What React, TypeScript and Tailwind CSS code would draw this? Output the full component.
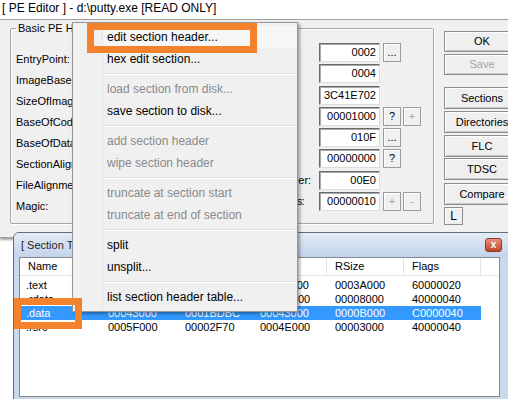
import React from 'react';

const leftLabels = [
  'EntryPoint:',
  'ImageBase:',
  'SizeOfImage:',
  'BaseOfCode:',
  'BaseOfData:',
  'SectionAlignment:',
  'FileAlignment:',
  'Magic:',
];

type Btn = { t: string; off?: boolean };
type Row = { label: string; value: string; btns: Btn[]; tight?: boolean };

// labels of the first rows sit under the popup menu, so they are left empty
const rightRows: Row[] = [
  { label: '', value: '0002', btns: [{ t: '...' }] },
  { label: '', value: '0004', btns: [] },
  { label: '', value: '3C41E702', btns: [] },
  { label: '', value: '00001000', btns: [{ t: '?' }, { t: '+', off: true }] },
  { label: '', value: '010F', btns: [{ t: '...' }] },
  { label: '', value: '00000000', btns: [{ t: '?' }] },
  { label: 'SizeOfOptionalHeader:', value: '00E0', btns: [] },
  { label: 'NumberOfRvaAndSizes:', value: '00000010', btns: [{ t: '+', off: true }, { t: '-', off: true }], tight: true },
];

type MenuItem = { t: string; off?: boolean } | 'sep';

const menu: MenuItem[] = [
  { t: 'edit section header...' },
  { t: 'hex edit section...' },
  'sep',
  { t: 'load section from disk...', off: true },
  { t: 'save section to disk...' },
  'sep',
  { t: 'add section header', off: true },
  { t: 'wipe section header', off: true },
  'sep',
  { t: 'truncate at section start', off: true },
  { t: 'truncate at end of section', off: true },
  'sep',
  { t: 'split' },
  { t: 'unsplit...' },
  'sep',
  { t: 'list section header table...' },
];

const cols = [
  { name: 'Name', w: 'w-[80px]' },
  { name: '', w: 'w-[77px]' },
  { name: '', w: 'w-[75px]' },
  { name: 'ROffset', w: 'w-[75px]' },
  { name: 'RSize', w: 'w-[77px]' },
  { name: 'Flags', w: 'w-[77px]' },
];

const sections = [
  ['.text', '', '', '00001000', '0003A000', '60000020'],
  ['.rdata', '', '', '0003B000', '00008000', '40000040'],
  ['.data', '00043000', '0001BDBC', '00043000', '0000B000', 'C0000040'],
  ['.rsrc', '0005F000', '00002F70', '0004E000', '00003000', '40000040'],
];

function SmallBtn({ b }: { b: Btn }) {
  return (
    <div
      className={`w-[18px] h-[19px] flex items-center justify-center border border-[#9c9c9c] bg-[#f0f0f0] shadow-[inset_1px_1px_0_#fff] leading-none ${
        b.off ? 'text-[#a8a8a8]' : 'text-black'
      }`}
    >
      {b.t}
    </div>
  );
}

function DlgBtn({ label, off, h, mt }: { label: string; off?: boolean; h: string; mt: string }) {
  return (
    <div
      className={`${h} ${mt} w-[76px] flex items-center justify-center border border-[#8e8e8e] bg-[#efefef] shadow-[inset_1px_1px_0_#fff,inset_-1px_-1px_0_#c8c8c8] ${
        off ? 'text-[#a3a3a3]' : 'text-black'
      }`}
    >
      {label}
    </div>
  );
}

export default function App() {
  return (
    <div className="relative w-[508px] h-[399px] overflow-hidden bg-white text-black font-['Liberation_Sans',Arial,sans-serif]">
      {/* title */}
      <div className="h-[19px] pl-[2px] text-[12px] leading-[17px] whitespace-nowrap">
        {'[ PE Editor ] - d:\\putty.exe [READ ONLY]'}
      </div>

      {/* main dialog */}
      <div className="h-[219px] w-[580px] bg-[#f0f0f0] border-t border-b border-[#a0a0a0] shadow-[0_2px_2px_rgba(0,0,0,0.35)] flex items-start text-[11px]">
        <fieldset className="ml-[10px] mt-[2px] w-[424px] h-[202px] border border-[#a8a8a8] rounded-[2px] shadow-[inset_1px_1px_0_#fff,1px_1px_0_#fff]">
          <legend className="ml-[5px] px-[2px] leading-[13px] whitespace-nowrap">Basic PE H</legend>
          <div className="flex">
            <div className="w-[187px] pl-[5px] pt-[14px] flex flex-col">
              {leftLabels.map((l) => (
                <div key={l} className="h-[21px] leading-[21px] whitespace-nowrap">
                  {l}
                </div>
              ))}
            </div>
            <div className="pt-[8px] flex flex-col gap-[2.3px]">
              {rightRows.map((r) => (
                <div key={r.value} className="h-[19px] flex items-center">
                  <div
                    className={`w-[121px] whitespace-nowrap overflow-hidden ${r.tight ? 'tracking-[-0.7px]' : ''}`}
                  >
                    {r.label}
                  </div>
                  <div className="w-[61px] h-[19px] bg-white border border-t-[#6a6a6a] border-l-[#6a6a6a] border-r-[#dcdcdc] border-b-[#dcdcdc] shadow-[inset_1px_1px_0_#a8a8a8] text-right pr-[3px] leading-[17px]">
                    {r.value}
                  </div>
                  <div className="ml-[3px] flex gap-[2px]">
                    {r.btns.map((b, i) => (
                      <SmallBtn key={i} b={b} />
                    ))}
                  </div>
                </div>
              ))}
            </div>
          </div>
        </fieldset>

        <div className="ml-[10px] flex flex-col">
          <DlgBtn label="OK" h="h-[21px]" mt="mt-[11px]" />
          <DlgBtn label="Save" off h="h-[21px]" mt="mt-[2px]" />
          <DlgBtn label="Sections" h="h-[22px]" mt="mt-[12px]" />
          <DlgBtn label="Directories" h="h-[22px]" mt="mt-[2px]" />
          <DlgBtn label="FLC" h="h-[22px]" mt="mt-[2px]" />
          <DlgBtn label="TDSC" h="h-[22px]" mt="mt-[1px]" />
          <DlgBtn label="Compare" h="h-[22px]" mt="mt-[3px]" />
          <div className="mt-[2px] w-[19px] h-[18px] flex items-center justify-center border border-[#8e8e8e] bg-[#efefef] shadow-[inset_1px_1px_0_#fff] text-[12px]">
            L
          </div>
        </div>
      </div>

      {/* section table window */}
      <div className="absolute left-[13px] top-[232px] w-[500px] h-[172px] border border-[#5f6e81] rounded-t-[6px] bg-[#c9d8eb] flex flex-col">
        <div className="h-[24px] flex items-center pl-[7px] pr-[10px] rounded-t-[5px] bg-gradient-to-b from-[#e3ebf6] to-[#c2d3e9]">
          <span className="text-[11px] text-[#1e1e1e] whitespace-nowrap">[ Section T</span>
          <div className="ml-auto w-[17px] h-[14px] rounded-[3px] border border-[#8c3a2a] bg-gradient-to-b from-[#e8917c] to-[#c4412b] flex items-center justify-center text-white text-[10px] font-bold leading-none">
            x
          </div>
        </div>
        <div className="ml-[5px] w-[481px] h-[140px] bg-white border border-[#828790] text-[11px]">
          <div className="h-[18px] flex border-b border-[#e3e3e3]">
            {cols.map((c, i) => (
              <div key={i} className={`${c.w} pl-[8px] leading-[17px] border-r border-[#e3e3e3]`}>
                {c.name}
              </div>
            ))}
          </div>
          <div className="pt-[2px]">
            {sections.map((s) => {
              const sel = s[0] === '.data';
              return (
                <div key={s[0]} className={`h-[14px] w-[461px] flex leading-[14px] ${sel ? 'bg-[#3399ff] text-white' : ''}`}>
                  {s.map((v, i) => (
                    <div key={i} className={`${cols[i].w} ${i === 0 ? 'pl-[6px]' : 'pl-[8px]'}`}>
                      {v}
                    </div>
                  ))}
                </div>
              );
            })}
          </div>
        </div>
      </div>

      {/* context menu */}
      <div className="absolute left-[72px] top-[22px] w-[226px] border border-[#979797] bg-[#f0f0f0] shadow-[2px_2px_3px_rgba(0,0,0,0.35)] py-[3px] text-[12px]">
        {menu.map((m, i) =>
          m === 'sep' ? (
            <div key={i} className="h-[8px] flex">
              <div className="w-[30px] border-r border-[#e2e3e3]" />
              <div className="flex-1 mr-[2px] flex flex-col justify-center">
                <div className="h-px bg-[#e0e0e0]" />
                <div className="h-px bg-white" />
              </div>
            </div>
          ) : (
            <div key={i} className="h-[22px] flex">
              <div className="w-[30px] border-r border-[#e2e3e3]" />
              <div
                className={`flex-1 pl-[4px] leading-[22px] whitespace-nowrap ${
                  m.off ? 'text-[#8a8a8a]' : 'text-black'
                } ${i === 0 ? 'bg-[#f6f6f6]' : ''}`}
              >
                {m.t}
              </div>
            </div>
          ),
        )}
      </div>

      {/* annotation boxes */}
      <div className="absolute left-[87px] top-[23px] w-[170px] h-[30px] border-[7px] border-[#f4812c]" />
      <div className="absolute left-[14px] top-[298px] w-[68px] h-[31px] border-[7px] border-[#f4812c]" />
    </div>
  );
}
